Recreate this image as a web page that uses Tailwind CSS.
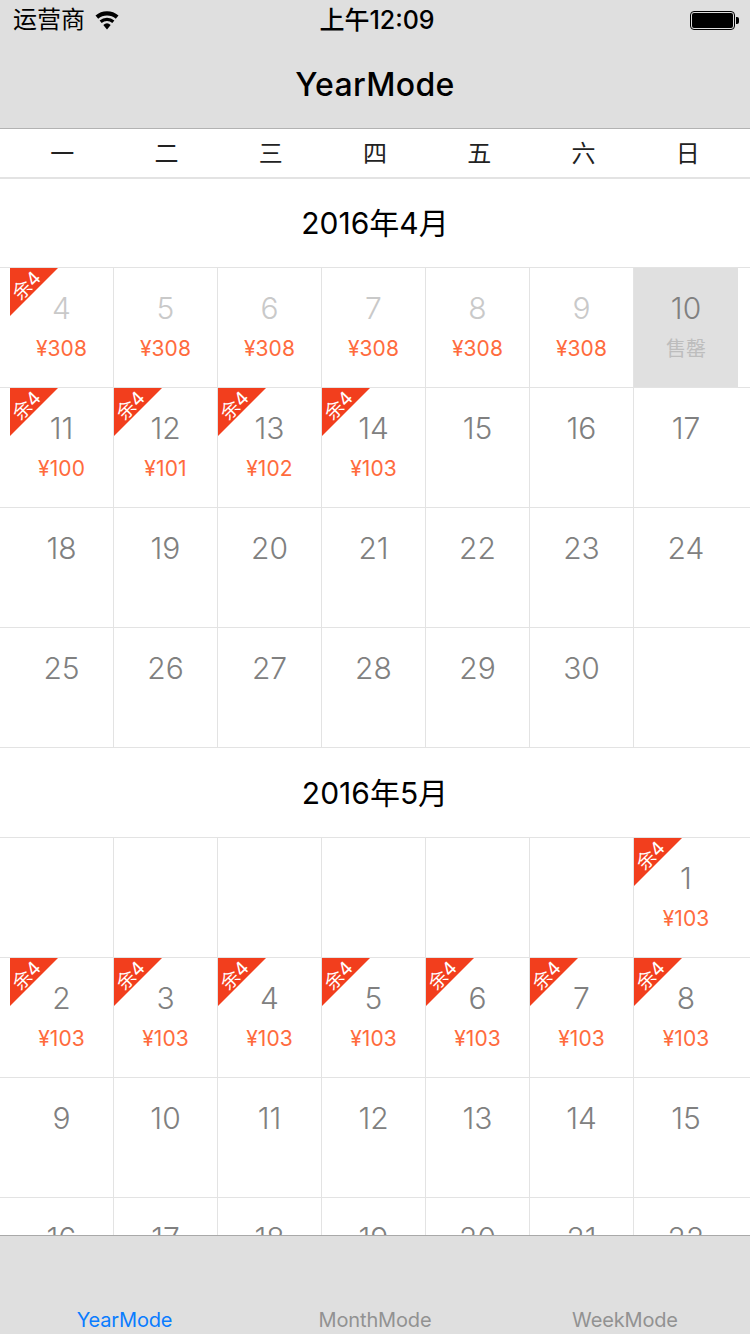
<!DOCTYPE html>
<html lang="zh">
<head>
<meta charset="utf-8">
<script src="https://cdn.jsdelivr.net/npm/@tailwindcss/browser@4"></script>
</head>
<body class="m-0 bg-white font-['Inter','Noto_Sans_CJK_SC',sans-serif]">
<div class="w-[750px] h-[1334px] flex flex-col overflow-hidden bg-white">
  <header class="h-[129px] shrink-0 bg-[#dfdfdf] border-b border-[#b2b2b2] flex flex-col">
    <div class="h-[40px] grid grid-cols-3 items-center text-black">
      <div class="flex items-center pl-[13px] gap-[9px] text-[24px] leading-[40px]">
        <span>运营商</span>
        <svg width="26" height="20" viewBox="0 0 26 20" fill="#000"><path d="M13 19.5 9.3 15a5.6 5.6 0 0 1 7.4 0L13 19.5Z"/><path d="M7.7 13 5.6 10.4a11.4 11.4 0 0 1 14.8 0L18.300 13a8.200 8.200 0 0 0-10.600 0Z"/><path d="M4.200 8.700 1.500 5.500a17.600 17.600 0 0 1 23 0L21.800 8.700a13.400 13.400 0 0 0-17.600 0Z"/></svg>
      </div>
      <div class="text-center text-[25px] font-medium leading-[40px] whitespace-nowrap pl-[4px]">上午12:09</div>
      <div class="flex justify-end items-center pr-[11px] pt-[1px]">
        <div class="w-[45px] h-[19px] rounded-[4px] border border-black p-[1px]"><div class="w-full h-full rounded-[2px] bg-black"></div></div>
        <div class="w-[3px] h-[7px] ml-[1px] rounded-r-[2px] bg-black"></div>
      </div>
    </div>
    <div class="h-[88px] flex items-center justify-center text-[32px] font-medium tracking-[0.35px] text-black pt-[1px]">YearMode</div>
  </header>

  <div class="h-[50px] shrink-0 grid grid-cols-7 pl-[10px] pr-[10px] pt-[1px] items-center text-center text-[24px] text-[#222] border-b-2 border-[#e3e3e3]">
    <span>一</span><span>二</span><span>三</span><span>四</span><span>五</span><span>六</span><span>日</span>
  </div>

  <main class="flex-1 min-h-0 overflow-hidden">
    <h2 class="h-[88px] flex items-center justify-center text-[30px] font-normal text-black">2016年4月</h2>
    <div class="grid grid-cols-[repeat(7,104px)] auto-rows-[120px] pl-[10px] relative">
      <div class="contents">
        <div class="relative border-t border-r border-[#e3e3e3] flex flex-col items-center pt-[22px]"><div class="absolute left-0 top-0 w-[48px] h-[48px] bg-[#f23e1d] [clip-path:polygon(0_0,100%_0,0_100%)]"><span class="absolute left-[1px] top-[8px] w-[32px] text-center text-[19px] leading-[20px] text-white -rotate-45">余4</span></div><span class="text-[30px] font-[350] leading-[36px] text-[#c9c9c9]">4</span><span class="mt-[11px] text-[21px] leading-[24px] tracking-[0.1px] text-[#ff6b3d]">¥308</span></div>
        <div class="relative border-t border-r border-[#e3e3e3] flex flex-col items-center pt-[22px]"><span class="text-[30px] font-[350] leading-[36px] text-[#c9c9c9]">5</span><span class="mt-[11px] text-[21px] leading-[24px] tracking-[0.1px] text-[#ff6b3d]">¥308</span></div>
        <div class="relative border-t border-r border-[#e3e3e3] flex flex-col items-center pt-[22px]"><span class="text-[30px] font-[350] leading-[36px] text-[#c9c9c9]">6</span><span class="mt-[11px] text-[21px] leading-[24px] tracking-[0.1px] text-[#ff6b3d]">¥308</span></div>
        <div class="relative border-t border-r border-[#e3e3e3] flex flex-col items-center pt-[22px]"><span class="text-[30px] font-[350] leading-[36px] text-[#c9c9c9]">7</span><span class="mt-[11px] text-[21px] leading-[24px] tracking-[0.1px] text-[#ff6b3d]">¥308</span></div>
        <div class="relative border-t border-r border-[#e3e3e3] flex flex-col items-center pt-[22px]"><span class="text-[30px] font-[350] leading-[36px] text-[#c9c9c9]">8</span><span class="mt-[11px] text-[21px] leading-[24px] tracking-[0.1px] text-[#ff6b3d]">¥308</span></div>
        <div class="relative border-t border-r border-[#e3e3e3] flex flex-col items-center pt-[22px]"><span class="text-[30px] font-[350] leading-[36px] text-[#c9c9c9]">9</span><span class="mt-[11px] text-[21px] leading-[24px] tracking-[0.1px] text-[#ff6b3d]">¥308</span></div>
        <div class="relative border-t border-[#e3e3e3] bg-[#e0e0e0] flex flex-col items-center pt-[22px]"><span class="text-[30px] font-[350] leading-[36px] text-[#808080]">10</span><span class="mt-[11px] text-[20px] leading-[24px] text-[#bdbdbd]">售罄</span></div>
      </div>
      <div class="contents">
        <div class="relative border-t border-r border-[#e3e3e3] flex flex-col items-center pt-[22px]"><div class="absolute left-0 top-0 w-[48px] h-[48px] bg-[#f23e1d] [clip-path:polygon(0_0,100%_0,0_100%)]"><span class="absolute left-[1px] top-[8px] w-[32px] text-center text-[19px] leading-[20px] text-white -rotate-45">余4</span></div><span class="text-[30px] font-[350] leading-[36px] text-[#808080]">11</span><span class="mt-[11px] text-[21px] leading-[24px] tracking-[0.1px] text-[#ff6b3d]">¥100</span></div>
        <div class="relative border-t border-r border-[#e3e3e3] flex flex-col items-center pt-[22px]"><div class="absolute left-0 top-0 w-[48px] h-[48px] bg-[#f23e1d] [clip-path:polygon(0_0,100%_0,0_100%)]"><span class="absolute left-[1px] top-[8px] w-[32px] text-center text-[19px] leading-[20px] text-white -rotate-45">余4</span></div><span class="text-[30px] font-[350] leading-[36px] text-[#808080]">12</span><span class="mt-[11px] text-[21px] leading-[24px] tracking-[0.1px] text-[#ff6b3d]">¥101</span></div>
        <div class="relative border-t border-r border-[#e3e3e3] flex flex-col items-center pt-[22px]"><div class="absolute left-0 top-0 w-[48px] h-[48px] bg-[#f23e1d] [clip-path:polygon(0_0,100%_0,0_100%)]"><span class="absolute left-[1px] top-[8px] w-[32px] text-center text-[19px] leading-[20px] text-white -rotate-45">余4</span></div><span class="text-[30px] font-[350] leading-[36px] text-[#808080]">13</span><span class="mt-[11px] text-[21px] leading-[24px] tracking-[0.1px] text-[#ff6b3d]">¥102</span></div>
        <div class="relative border-t border-r border-[#e3e3e3] flex flex-col items-center pt-[22px]"><div class="absolute left-0 top-0 w-[48px] h-[48px] bg-[#f23e1d] [clip-path:polygon(0_0,100%_0,0_100%)]"><span class="absolute left-[1px] top-[8px] w-[32px] text-center text-[19px] leading-[20px] text-white -rotate-45">余4</span></div><span class="text-[30px] font-[350] leading-[36px] text-[#808080]">14</span><span class="mt-[11px] text-[21px] leading-[24px] tracking-[0.1px] text-[#ff6b3d]">¥103</span></div>
        <div class="border-t border-r border-[#e3e3e3] flex flex-col items-center pt-[22px]"><span class="text-[30px] font-[350] leading-[36px] text-[#808080]">15</span></div>
        <div class="border-t border-r border-[#e3e3e3] flex flex-col items-center pt-[22px]"><span class="text-[30px] font-[350] leading-[36px] text-[#808080]">16</span></div>
        <div class="border-t border-[#e3e3e3] flex flex-col items-center pt-[22px]"><span class="text-[30px] font-[350] leading-[36px] text-[#808080]">17</span></div>
      </div>
      <div class="contents">
        <div class="border-t border-r border-[#e3e3e3] flex flex-col items-center pt-[22px]"><span class="text-[30px] font-[350] leading-[36px] text-[#808080]">18</span></div>
        <div class="border-t border-r border-[#e3e3e3] flex flex-col items-center pt-[22px]"><span class="text-[30px] font-[350] leading-[36px] text-[#808080]">19</span></div>
        <div class="border-t border-r border-[#e3e3e3] flex flex-col items-center pt-[22px]"><span class="text-[30px] font-[350] leading-[36px] text-[#808080]">20</span></div>
        <div class="border-t border-r border-[#e3e3e3] flex flex-col items-center pt-[22px]"><span class="text-[30px] font-[350] leading-[36px] text-[#808080]">21</span></div>
        <div class="border-t border-r border-[#e3e3e3] flex flex-col items-center pt-[22px]"><span class="text-[30px] font-[350] leading-[36px] text-[#808080]">22</span></div>
        <div class="border-t border-r border-[#e3e3e3] flex flex-col items-center pt-[22px]"><span class="text-[30px] font-[350] leading-[36px] text-[#808080]">23</span></div>
        <div class="border-t border-[#e3e3e3] flex flex-col items-center pt-[22px]"><span class="text-[30px] font-[350] leading-[36px] text-[#808080]">24</span></div>
      </div>
      <div class="contents">
        <div class="border-t border-r border-[#e3e3e3] flex flex-col items-center pt-[22px]"><span class="text-[30px] font-[350] leading-[36px] text-[#808080]">25</span></div>
        <div class="border-t border-r border-[#e3e3e3] flex flex-col items-center pt-[22px]"><span class="text-[30px] font-[350] leading-[36px] text-[#808080]">26</span></div>
        <div class="border-t border-r border-[#e3e3e3] flex flex-col items-center pt-[22px]"><span class="text-[30px] font-[350] leading-[36px] text-[#808080]">27</span></div>
        <div class="border-t border-r border-[#e3e3e3] flex flex-col items-center pt-[22px]"><span class="text-[30px] font-[350] leading-[36px] text-[#808080]">28</span></div>
        <div class="border-t border-r border-[#e3e3e3] flex flex-col items-center pt-[22px]"><span class="text-[30px] font-[350] leading-[36px] text-[#808080]">29</span></div>
        <div class="border-t border-r border-[#e3e3e3] flex flex-col items-center pt-[22px]"><span class="text-[30px] font-[350] leading-[36px] text-[#808080]">30</span></div>
        <div class="border-t border-[#e3e3e3]"></div>
      </div>
      <div class="absolute left-0 right-0 top-0 h-px bg-[#e3e3e3]"></div>
      <div class="absolute left-0 right-0 top-[120px] h-px bg-[#e3e3e3]"></div>
      <div class="absolute left-0 right-0 top-[240px] h-px bg-[#e3e3e3]"></div>
      <div class="absolute left-0 right-0 top-[360px] h-px bg-[#e3e3e3]"></div>
    </div>

    <h2 class="h-[90px] border-t border-[#e3e3e3] pt-[1px] flex items-center justify-center text-[30px] font-normal text-black">2016年5月</h2>
    <div class="grid grid-cols-[repeat(7,104px)] auto-rows-[120px] pl-[10px] relative">
      <div class="border-t border-r border-[#e3e3e3]"></div>
      <div class="border-t border-r border-[#e3e3e3]"></div>
      <div class="border-t border-r border-[#e3e3e3]"></div>
      <div class="border-t border-r border-[#e3e3e3]"></div>
      <div class="border-t border-r border-[#e3e3e3]"></div>
      <div class="border-t border-r border-[#e3e3e3]"></div>
      <div class="relative border-t border-[#e3e3e3] flex flex-col items-center pt-[22px]"><div class="absolute left-0 top-0 w-[48px] h-[48px] bg-[#f23e1d] [clip-path:polygon(0_0,100%_0,0_100%)]"><span class="absolute left-[1px] top-[8px] w-[32px] text-center text-[19px] leading-[20px] text-white -rotate-45">余4</span></div><span class="text-[30px] font-[350] leading-[36px] text-[#808080]">1</span><span class="mt-[11px] text-[21px] leading-[24px] tracking-[0.1px] text-[#ff6b3d]">¥103</span></div>

      <div class="relative border-t border-r border-[#e3e3e3] flex flex-col items-center pt-[22px]"><div class="absolute left-0 top-0 w-[48px] h-[48px] bg-[#f23e1d] [clip-path:polygon(0_0,100%_0,0_100%)]"><span class="absolute left-[1px] top-[8px] w-[32px] text-center text-[19px] leading-[20px] text-white -rotate-45">余4</span></div><span class="text-[30px] font-[350] leading-[36px] text-[#808080]">2</span><span class="mt-[11px] text-[21px] leading-[24px] tracking-[0.1px] text-[#ff6b3d]">¥103</span></div>
      <div class="relative border-t border-r border-[#e3e3e3] flex flex-col items-center pt-[22px]"><div class="absolute left-0 top-0 w-[48px] h-[48px] bg-[#f23e1d] [clip-path:polygon(0_0,100%_0,0_100%)]"><span class="absolute left-[1px] top-[8px] w-[32px] text-center text-[19px] leading-[20px] text-white -rotate-45">余4</span></div><span class="text-[30px] font-[350] leading-[36px] text-[#808080]">3</span><span class="mt-[11px] text-[21px] leading-[24px] tracking-[0.1px] text-[#ff6b3d]">¥103</span></div>
      <div class="relative border-t border-r border-[#e3e3e3] flex flex-col items-center pt-[22px]"><div class="absolute left-0 top-0 w-[48px] h-[48px] bg-[#f23e1d] [clip-path:polygon(0_0,100%_0,0_100%)]"><span class="absolute left-[1px] top-[8px] w-[32px] text-center text-[19px] leading-[20px] text-white -rotate-45">余4</span></div><span class="text-[30px] font-[350] leading-[36px] text-[#808080]">4</span><span class="mt-[11px] text-[21px] leading-[24px] tracking-[0.1px] text-[#ff6b3d]">¥103</span></div>
      <div class="relative border-t border-r border-[#e3e3e3] flex flex-col items-center pt-[22px]"><div class="absolute left-0 top-0 w-[48px] h-[48px] bg-[#f23e1d] [clip-path:polygon(0_0,100%_0,0_100%)]"><span class="absolute left-[1px] top-[8px] w-[32px] text-center text-[19px] leading-[20px] text-white -rotate-45">余4</span></div><span class="text-[30px] font-[350] leading-[36px] text-[#808080]">5</span><span class="mt-[11px] text-[21px] leading-[24px] tracking-[0.1px] text-[#ff6b3d]">¥103</span></div>
      <div class="relative border-t border-r border-[#e3e3e3] flex flex-col items-center pt-[22px]"><div class="absolute left-0 top-0 w-[48px] h-[48px] bg-[#f23e1d] [clip-path:polygon(0_0,100%_0,0_100%)]"><span class="absolute left-[1px] top-[8px] w-[32px] text-center text-[19px] leading-[20px] text-white -rotate-45">余4</span></div><span class="text-[30px] font-[350] leading-[36px] text-[#808080]">6</span><span class="mt-[11px] text-[21px] leading-[24px] tracking-[0.1px] text-[#ff6b3d]">¥103</span></div>
      <div class="relative border-t border-r border-[#e3e3e3] flex flex-col items-center pt-[22px]"><div class="absolute left-0 top-0 w-[48px] h-[48px] bg-[#f23e1d] [clip-path:polygon(0_0,100%_0,0_100%)]"><span class="absolute left-[1px] top-[8px] w-[32px] text-center text-[19px] leading-[20px] text-white -rotate-45">余4</span></div><span class="text-[30px] font-[350] leading-[36px] text-[#808080]">7</span><span class="mt-[11px] text-[21px] leading-[24px] tracking-[0.1px] text-[#ff6b3d]">¥103</span></div>
      <div class="relative border-t border-[#e3e3e3] flex flex-col items-center pt-[22px]"><div class="absolute left-0 top-0 w-[48px] h-[48px] bg-[#f23e1d] [clip-path:polygon(0_0,100%_0,0_100%)]"><span class="absolute left-[1px] top-[8px] w-[32px] text-center text-[19px] leading-[20px] text-white -rotate-45">余4</span></div><span class="text-[30px] font-[350] leading-[36px] text-[#808080]">8</span><span class="mt-[11px] text-[21px] leading-[24px] tracking-[0.1px] text-[#ff6b3d]">¥103</span></div>

      <div class="border-t border-r border-[#e3e3e3] flex flex-col items-center pt-[22px]"><span class="text-[30px] font-[350] leading-[36px] text-[#808080]">9</span></div>
      <div class="border-t border-r border-[#e3e3e3] flex flex-col items-center pt-[22px]"><span class="text-[30px] font-[350] leading-[36px] text-[#808080]">10</span></div>
      <div class="border-t border-r border-[#e3e3e3] flex flex-col items-center pt-[22px]"><span class="text-[30px] font-[350] leading-[36px] text-[#808080]">11</span></div>
      <div class="border-t border-r border-[#e3e3e3] flex flex-col items-center pt-[22px]"><span class="text-[30px] font-[350] leading-[36px] text-[#808080]">12</span></div>
      <div class="border-t border-r border-[#e3e3e3] flex flex-col items-center pt-[22px]"><span class="text-[30px] font-[350] leading-[36px] text-[#808080]">13</span></div>
      <div class="border-t border-r border-[#e3e3e3] flex flex-col items-center pt-[22px]"><span class="text-[30px] font-[350] leading-[36px] text-[#808080]">14</span></div>
      <div class="border-t border-[#e3e3e3] flex flex-col items-center pt-[22px]"><span class="text-[30px] font-[350] leading-[36px] text-[#808080]">15</span></div>

      <div class="border-t border-r border-[#e3e3e3] flex flex-col items-center pt-[22px]"><span class="text-[30px] font-[350] leading-[36px] text-[#808080]">16</span></div>
      <div class="border-t border-r border-[#e3e3e3] flex flex-col items-center pt-[22px]"><span class="text-[30px] font-[350] leading-[36px] text-[#808080]">17</span></div>
      <div class="border-t border-r border-[#e3e3e3] flex flex-col items-center pt-[22px]"><span class="text-[30px] font-[350] leading-[36px] text-[#808080]">18</span></div>
      <div class="border-t border-r border-[#e3e3e3] flex flex-col items-center pt-[22px]"><span class="text-[30px] font-[350] leading-[36px] text-[#808080]">19</span></div>
      <div class="border-t border-r border-[#e3e3e3] flex flex-col items-center pt-[22px]"><span class="text-[30px] font-[350] leading-[36px] text-[#808080]">20</span></div>
      <div class="border-t border-r border-[#e3e3e3] flex flex-col items-center pt-[22px]"><span class="text-[30px] font-[350] leading-[36px] text-[#808080]">21</span></div>
      <div class="border-t border-[#e3e3e3] flex flex-col items-center pt-[22px]"><span class="text-[30px] font-[350] leading-[36px] text-[#808080]">22</span></div>

      <div class="absolute left-0 right-0 top-0 h-px bg-[#e3e3e3]"></div>
      <div class="absolute left-0 right-0 top-[120px] h-px bg-[#e3e3e3]"></div>
      <div class="absolute left-0 right-0 top-[240px] h-px bg-[#e3e3e3]"></div>
      <div class="absolute left-0 right-0 top-[360px] h-px bg-[#e3e3e3]"></div>
    </div>
  </main>

  <nav class="h-[99px] shrink-0 bg-[#dfdfdf] border-t border-[#a9a9a9] grid grid-cols-3 items-end text-center text-[20px] tracking-[-0.15px] leading-[24px] pb-[2px] text-[#929292]">
    <span class="text-[#0a7cff] pr-[1px]">YearMode</span>
    <span>MonthMode</span>
    <span>WeekMode</span>
  </nav>
</div>
</body>
</html>
